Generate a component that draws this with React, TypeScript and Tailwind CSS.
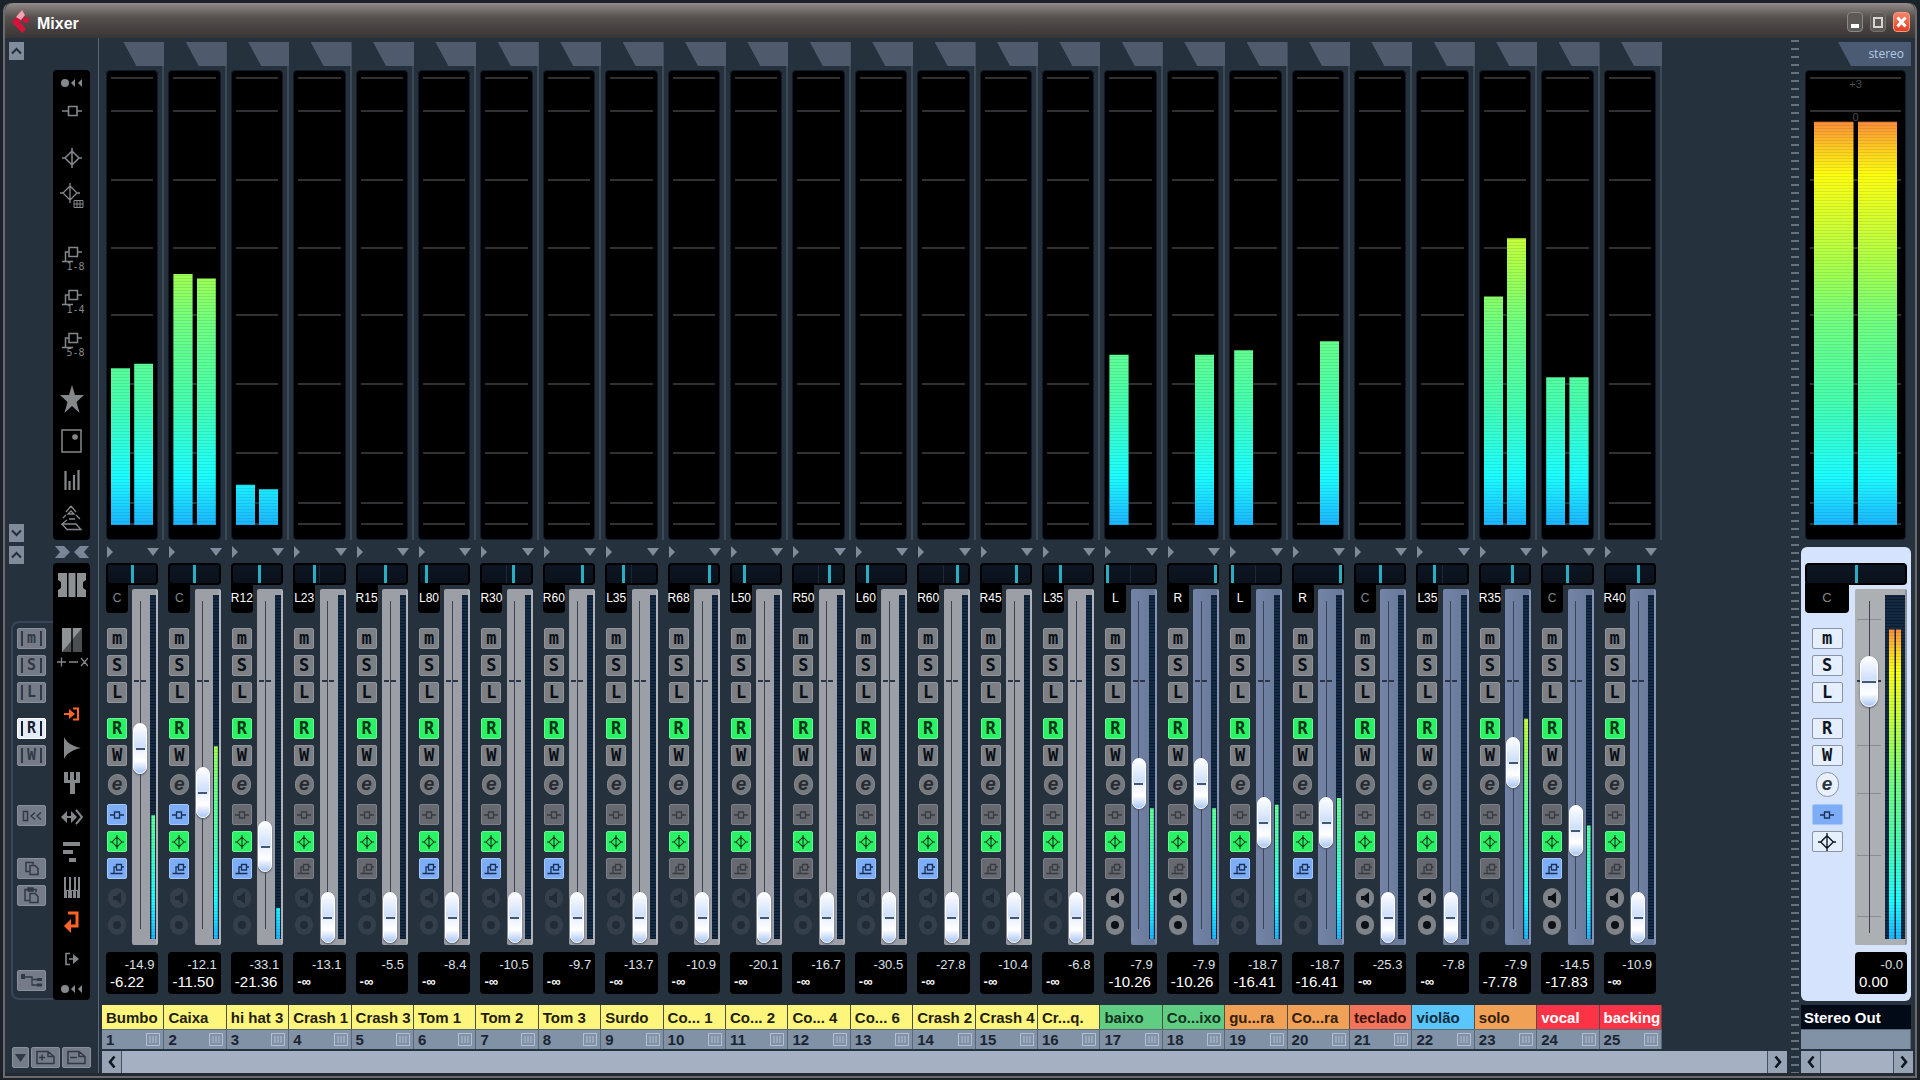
import { useState } from 'react';
import type { ReactNode } from 'react';
import clsx from 'clsx';

type Channel = {
  name: string;
  color: string;
  pan: number;
  level: [number, number];
  fader: number;
  peak: string;
  gain: string;
  insert?: boolean;
  send?: boolean;
  monitor?: boolean;
  audio?: boolean;
};

const YELLOW = 'bg-[#fdf57c] text-[#1f1e10]';
const GREEN = 'bg-[#5fce82] text-[#14301e]';
const ORANGE = 'bg-[#f0a156] text-[#33200c]';
const CORAL = 'bg-[#f3735a] text-[#3a120c]';
const BLUE = 'bg-[#5ac6fb] text-[#0f2c40]';
const RED = 'bg-[#fa3446] text-white';

const CHANNELS: Channel[] = [
  { name: 'Bumbo', color: YELLOW, pan: 0, level: [35, 36], fader: 169, peak: '-14.9', gain: '-6.22', insert: true, send: true },
  { name: 'Caixa', color: YELLOW, pan: 0, level: [56, 55], fader: 125, peak: '-12.1', gain: '-11.50', insert: true, send: true },
  { name: 'hi hat 3', color: YELLOW, pan: 12, level: [9, 8], fader: 71, peak: '-33.1', gain: '-21.36', send: true },
  { name: 'Crash 1', color: YELLOW, pan: -23, level: [0, 0], fader: 0, peak: '-13.1', gain: '-∞' },
  { name: 'Crash 3', color: YELLOW, pan: 15, level: [0, 0], fader: 0, peak: '-5.5', gain: '-∞' },
  { name: 'Tom 1', color: YELLOW, pan: -80, level: [0, 0], fader: 0, peak: '-8.4', gain: '-∞', send: true },
  { name: 'Tom 2', color: YELLOW, pan: 30, level: [0, 0], fader: 0, peak: '-10.5', gain: '-∞', send: true },
  { name: 'Tom 3', color: YELLOW, pan: 60, level: [0, 0], fader: 0, peak: '-9.7', gain: '-∞', send: true },
  { name: 'Surdo', color: YELLOW, pan: -35, level: [0, 0], fader: 0, peak: '-13.7', gain: '-∞' },
  { name: 'Co... 1', color: YELLOW, pan: 68, level: [0, 0], fader: 0, peak: '-10.9', gain: '-∞' },
  { name: 'Co... 2', color: YELLOW, pan: -50, level: [0, 0], fader: 0, peak: '-20.1', gain: '-∞' },
  { name: 'Co... 4', color: YELLOW, pan: 50, level: [0, 0], fader: 0, peak: '-16.7', gain: '-∞' },
  { name: 'Co... 6', color: YELLOW, pan: -60, level: [0, 0], fader: 0, peak: '-30.5', gain: '-∞', send: true },
  { name: 'Crash 2', color: YELLOW, pan: 60, level: [0, 0], fader: 0, peak: '-27.8', gain: '-∞', send: true },
  { name: 'Crash 4', color: YELLOW, pan: 45, level: [0, 0], fader: 0, peak: '-10.4', gain: '-∞' },
  { name: 'Cr...q.', color: YELLOW, pan: -35, level: [0, 0], fader: 0, peak: '-6.8', gain: '-∞' },
  { name: 'baixo', color: GREEN, pan: -100, level: [38, 0], fader: 134, peak: '-7.9', gain: '-10.26', monitor: true, audio: true },
  { name: 'Co...ixo', color: GREEN, pan: 100, level: [0, 38], fader: 134, peak: '-7.9', gain: '-10.26', monitor: true, audio: true },
  { name: 'gu...ra', color: ORANGE, pan: -100, level: [39, 0], fader: 95, peak: '-18.7', gain: '-16.41', send: true, audio: true },
  { name: 'Co...ra', color: ORANGE, pan: 100, level: [0, 41], fader: 95, peak: '-18.7', gain: '-16.41', send: true, audio: true },
  { name: 'teclado', color: CORAL, pan: 0, level: [0, 0], fader: 0, peak: '-25.3', gain: '-∞', monitor: true, audio: true },
  { name: 'violão', color: BLUE, pan: -35, level: [0, 0], fader: 0, peak: '-7.8', gain: '-∞', monitor: true, audio: true },
  { name: 'solo', color: ORANGE, pan: 35, level: [51, 64], fader: 155, peak: '-7.9', gain: '-7.78', audio: true },
  { name: 'vocal', color: RED, pan: 0, level: [33, 33], fader: 87, peak: '-14.5', gain: '-17.83', send: true, monitor: true, audio: true },
  { name: 'backing', color: RED, pan: 40, level: [0, 0], fader: 0, peak: '-10.9', gain: '-∞', monitor: true, audio: true },
];

const METER_FILL =
  'bg-[repeating-linear-gradient(to_top,rgba(0,40,60,0.1)_0_1px,transparent_1px_3px),linear-gradient(to_top,#1cb4ff_0%,#1cffff_11%,#48ffac_28%,#70ff80_45%,#a0ff50_56%,#c6ff3a_64%,#ffff10_78%,#ffcc20_84%,#ff8c38_90%)]';

function panLabel(pan: number) {
  if (pan === 0) return 'C';
  const side = pan < 0 ? 'L' : 'R';
  return Math.abs(pan) === 100 ? side : side + Math.abs(pan);
}

function Glyph({ w, h, className, children }: { w: number; h: number; className?: string; children: ReactNode }) {
  return (
    <svg width={w} height={h} viewBox={`0 0 ${w} ${h}`} className={className} fill="none" stroke="currentColor" strokeWidth="1.3" aria-hidden="true">
      {children}
    </svg>
  );
}

const InsertIcon = () => (
  <Glyph w={20} h={12}>
    <path d="M0 6h6M15 6h5M6.500 1.500h8.500v9h-8.500z" strokeWidth="1.600" />
  </Glyph>
);

const SmallInsertIcon = () => (
  <Glyph w={14} h={10}>
    <path d="M0 5h4M10 5h4M4.500 2h5v6h-5z" />
  </Glyph>
);

const EqIcon = ({ w = 20, h = 20 }: { w?: number; h?: number }) => (
  <svg width={w} height={h} viewBox="0 0 20 20" fill="none" stroke="currentColor" strokeWidth="1.500" aria-hidden="true">
    <path d="M0 10h3M17 10h3M10 0v20M10 3l7 7-7 7-7-7z" />
  </svg>
);

const SmallSendIcon = () => (
  <Glyph w={14} h={14}>
    <path d="M6.500 2.500h5v5.500h-5zM11.500 5h2.500M6.500 5h-2.500v6.500M0.500 11.500h12" />
  </Glyph>
);

const SendIcon = () => (
  <Glyph w={20} h={17}>
    <path d="M7 1.500h8.500v9h-8.500zM15.500 6h4.500M7 6h-3.500v9.500M0 15.500h11" strokeWidth="1.500" />
  </Glyph>
);

const RecIcon = () => (
  <svg width="22" height="10" viewBox="0 0 22 10" fill="currentColor" aria-hidden="true">
    <circle cx="4" cy="5" r="4" />
    <path d="M14 1v8l-4-4zM21 1v8l-4-4z" />
  </svg>
);

const Caret = ({ up }: { up?: boolean }) => (
  <Glyph w={11} h={8}>
    <path d={up ? 'M1 6.500l4.500-4.500 4.500 4.500' : 'M1 1.500l4.500 4.500 4.500-4.500'} strokeWidth="2" />
  </Glyph>
);

const Chevron = ({ left }: { left?: boolean }) => (
  <Glyph w={8} h={14}>
    <path d={left ? 'M6.500 1.500l-4.500 5.500 4.500 5.500' : 'M1.500 1.500l4.500 5.500-4.500 5.500'} strokeWidth="2.600" />
  </Glyph>
);

function TitleBar() {
  return (
    <header className="flex h-[35px] shrink-0 items-center rounded-t-lg bg-linear-to-b from-[#928d8b] via-[#57514f] via-40% to-[#383534] pt-[3px] pr-[5px] pl-[7px]">
      <svg width="18" height="24" viewBox="0 0 18 24" aria-hidden="true">
        <path d="M10 0l3 5-5 7 6 7-4 4L0 12z" fill="#d3133a" />
        <path d="M10 0l3 5-4 5-5-3z" fill="#f0a5b1" />
        <circle cx="14" cy="10" r="3" fill="#d3133a" />
      </svg>
      <h1 className="ml-[7px] flex-1 pt-[4px] text-base font-bold text-white">Mixer</h1>
      <div className="flex gap-[7px]">
        <button aria-label="Minimize" className="flex h-[20px] w-[16px] items-end rounded border border-[#8c8886] bg-[#5d5957] p-[3px]">
          <span className="h-[4px] w-[8px] bg-white" />
        </button>
        <button aria-label="Maximize" className="flex h-[20px] w-[16px] items-center justify-center rounded border border-[#777371] bg-[#5d5957]">
          <span className="h-[11px] w-[10px] border-2 border-[#d8d4d2]" />
        </button>
        <button aria-label="Close" className="flex h-[20px] w-[17px] items-center justify-center rounded border border-[#f79a80] bg-linear-to-b from-[#f58468] to-[#e13d22] text-white">
          <Glyph w={11} h={12}>
            <path d="M1.500 1.500l8 9M9.500 1.500l-8 9" strokeWidth="3" />
          </Glyph>
        </button>
      </div>
    </header>
  );
}

function SideButton({ label, on, narrow, className, children }: { label: string; on?: boolean; narrow?: boolean; className?: string; children: ReactNode }) {
  return (
    <button
      aria-label={label}
      className={clsx(
        'flex h-[21px] shrink-0 items-center justify-center rounded-[2px] border',
        narrow ? 'w-[17px]' : 'w-[29px]',
        on ? 'border-white bg-[#e4ebf8] text-[#18202c]' : 'border-[#8a909b] bg-[#757c87] text-[#303947]',
        className
      )}
    >
      {children}
    </button>
  );
}

function BarLetter({ children }: { children: string }) {
  return (
    <span className="flex h-[15px] items-center border-x-2 border-current px-[4px] font-['DejaVu_Sans_Mono',monospace] text-[15px] leading-none font-bold">
      {children}
    </span>
  );
}

function CollapseButton({ label, up, className }: { label: string; up?: boolean; className?: string }) {
  return (
    <button aria-label={label} className={clsx('ml-[4px] flex h-[18px] w-[15px] items-center justify-center bg-[#818b9b] text-[#242e3b]', className)}>
      <Caret up={up} />
    </button>
  );
}

function StripButton({ label, className, children }: { label: string; className?: string; children: ReactNode }) {
  return (
    <button aria-label={label} className={clsx('flex w-full shrink-0 flex-col items-center justify-center', className)}>
      {children}
    </button>
  );
}

function SendRange({ range, className }: { range: string; className: string }) {
  return (
    <StripButton label={`Sends ${range}`} className={className}>
      <SendIcon />
      <span className="-mt-[2px] pl-[8px] font-['DejaVu_Sans_Mono',monospace] text-[10px] leading-[12px]">{range}</span>
    </StripButton>
  );
}

function Sidebar() {
  return (
    <aside className="flex w-[93px] shrink-0 flex-col">
      <div className="flex flex-1">
        <div className="flex w-[48px] flex-col pt-[4px]">
          <CollapseButton label="Collapse top" up />
          <div className="flex-1" />
          <CollapseButton label="Expand bottom" />
          <CollapseButton label="Collapse bottom" up className="mt-[4px]" />
          <div className="mt-[57px] ml-[6px] flex h-[379px] flex-col rounded-l-lg border-y-2 border-l-2 border-[#3a4657] pl-[4px]">
            <SideButton label="Mute all" className="mt-[5px]"><BarLetter>m</BarLetter></SideButton>
            <SideButton label="Solo all" className="mt-[6px]"><BarLetter>S</BarLetter></SideButton>
            <SideButton label="Listen all" className="mt-[6px]"><BarLetter>L</BarLetter></SideButton>
            <SideButton label="Read all" on className="mt-[15px]"><BarLetter>R</BarLetter></SideButton>
            <SideButton label="Write all" className="mt-[6px]"><BarLetter>W</BarLetter></SideButton>
            <SideButton label="Reset" className="mt-[39px]">
              <Glyph w={20} h={12}>
                <path d="M1.500 1.500h4v9h-4zM13 2.500l-4 3.500 4 3.500M19 2.500l-4 3.500 4 3.500" strokeWidth="1.500" />
              </Glyph>
            </SideButton>
            <SideButton label="Copy" className="mt-[32px]">
              <Glyph w={14} h={15}>
                <path d="M4 10.500h-3v-9h7v2M5 4.500h5l3 3v6h-8z" strokeWidth="1.500" />
              </Glyph>
            </SideButton>
            <SideButton label="Paste" className="mt-[6px]">
              <Glyph w={15} h={17}>
                <path d="M5 13.500h-4v-11h11v3M4 1h5v3h-5zM6 6.500h5l3 3v6h-8z" strokeWidth="1.500" />
              </Glyph>
            </SideButton>
            <SideButton label="Routing" className="mt-[64px]">
              <Glyph w={21} h={14}>
                <path d="M1 3h10v8h6M11 5.500h6" />
                <path d="M0 0h4v5h-4zM16 4h5v3h-5zM16 9.500h5v3h-5z" fill="currentColor" stroke="none" />
              </Glyph>
            </SideButton>
          </div>
        </div>

        <div className="flex w-[37px] flex-col pt-[32px] text-[#85888b]">
          <nav aria-label="Extended view" className="flex flex-1 flex-col rounded bg-black">
            <StripButton label="Record view" className="mt-[2px] h-[22px]"><RecIcon /></StripButton>
            <StripButton label="Inserts" className="mt-[6px] h-[22px]"><InsertIcon /></StripButton>
            <StripButton label="Equalizers" className="mt-[25px] h-[22px]"><EqIcon /></StripButton>
            <StripButton label="Equalizer curves" className="mt-[12px] h-[30px]">
              <Glyph w={24} h={26}>
                <path d="M0 10h3M17 10h3M10 0v20M10 3l7 7-7 7-7-7z" />
                <path d="M14 17.500h9v7h-9zM14 21h9M17 17v8M20 17v8" strokeWidth="1" />
              </Glyph>
            </StripButton>
            <SendRange range="1-8" className="mt-[35px] h-[27px]" />
            <SendRange range="1-4" className="mt-[16px] h-[27px]" />
            <SendRange range="5-8" className="mt-[16px] h-[27px]" />
            <StripButton label="User panel" className="mt-[25px] h-[30px]">
              <svg width="24" height="28" viewBox="0 0 24 28" fill="currentColor" aria-hidden="true">
                <path d="M12 0l3 10h9l-7.500 7 3 11-7.500-7-7.500 7 3-11L0 10h9z" />
              </svg>
            </StripButton>
            <StripButton label="Surround" className="mt-[14px] h-[26px]">
              <Glyph w={21} h={24}>
                <path d="M1 1h19v22h-19z" strokeWidth="1.500" />
                <circle cx="14" cy="8" r="2.800" fill="currentColor" stroke="none" />
              </Glyph>
            </StripButton>
            <StripButton label="Meters" className="mt-[15px] h-[22px]">
              <Glyph w={16} h={20}>
                <path d="M1.500 1v19M5.500 11v9M10 5v15M14.500 0v20" strokeWidth="2.200" />
              </Glyph>
            </StripButton>
            <StripButton label="Overview" className="mt-[14px] h-[26px]">
              <Glyph w={22} h={26}>
                <path d="M10 1l-5 6M10 1l5 6M7 9h6l-3-3zM5 10l-3 3M15 10l4 4M6 15l-5 4h14l5 5.500h-14l-5-5.500M8 14h6" />
              </Glyph>
            </StripButton>
          </nav>
          <button aria-label="Narrow channels" className="flex h-[23px] items-center justify-center">
            <svg width="34" height="12" viewBox="0 0 34 12" fill="#7a8698" aria-hidden="true">
              <path d="M0 0h9l6 6-6 6H0l5-6zM34 0h-9l-6 6 6 6h9l-5-6z" />
            </svg>
          </button>
          <nav aria-label="Channel types" className="flex h-[437px] flex-col rounded bg-black">
            <StripButton label="Channel blocks" className="mt-[9px] h-[26px]">
              <svg width="28" height="24" viewBox="0 0 28 24" fill="#8e9194" aria-hidden="true">
                <path d="M0 0h9v24H0v-7l3-2V9L0 7zM10.500 0h7v24h-7zM19 0h9v7l-3 2v6l3 2v7h-9z" />
              </svg>
            </StripButton>
            <StripButton label="Split view" className="mt-[29px] h-[26px]">
              <svg width="20" height="24" viewBox="0 0 20 24" aria-hidden="true">
                <path d="M0 0h20v24H0z" fill="#4b4e52" />
                <path d="M0 24V0h20z" fill="#909396" />
                <path d="M10 0v24" stroke="#000" strokeWidth="1.500" />
              </svg>
            </StripButton>
            <StripButton label="Add, remove, toggle" className="mt-[2px] h-[14px]">
              <Glyph w={32} h={10}>
                <path d="M1 5h9M5.500 0.500v9M13 5h9M25 1l7 8M32 1l-7 8" />
              </Glyph>
            </StripButton>
            <StripButton label="Hide inputs" className="mt-[35px] h-[20px] text-[#ff6426]">
              <Glyph w={15} h={14}>
                <path d="M0 7h8M9 1.500h5v11h-5" strokeWidth="2" />
                <path d="M5 2l6 5-6 5z" fill="currentColor" stroke="none" />
              </Glyph>
            </StripButton>
            <StripButton label="Hide audio" className="mt-[12px] h-[24px]">
              <svg width="18" height="22" viewBox="0 0 18 22" fill="currentColor" aria-hidden="true">
                <path d="M1 0c2 5 8 9 17 11C9 13 3 17 1 22z" />
              </svg>
            </StripButton>
            <StripButton label="Hide groups" className="mt-[11px] h-[24px]">
              <svg width="16" height="22" viewBox="0 0 16 22" fill="currentColor" aria-hidden="true">
                <path d="M0 0h4v8h2V0h4v8h2V0h4v11h-5v11H6V11H0z" />
              </svg>
            </StripButton>
            <StripButton label="Hide ReWire" className="mt-[10px] h-[24px]">
              <Glyph w={22} h={16}>
                <path d="M2 8h12M15 1l6 7-6 7" strokeWidth="2" />
                <path d="M0 8l6-6v12zM16 8l-6-6v12z" fill="currentColor" stroke="none" />
              </Glyph>
            </StripButton>
            <StripButton label="Hide MIDI" className="mt-[11px] h-[24px]">
              <Glyph w={18} h={20}>
                <path d="M0 2h17M0 10h10M6 18h7" strokeWidth="4" />
              </Glyph>
            </StripButton>
            <StripButton label="Hide instruments" className="mt-[11px] h-[24px]">
              <svg width="16" height="21" viewBox="0 0 16 21" fill="currentColor" aria-hidden="true">
                <path d="M0 0h2v13h3V0h2v13h3V0h2v13h2V0h2v21h-3v-7h-1v7H9v-7H8v7H4v-7H3v7H0z" />
              </svg>
            </StripButton>
            <StripButton label="Hide FX returns" className="mt-[10px] h-[26px] text-[#ff6426]">
              <Glyph w={15} h={23}>
                <path d="M4 2h9v13H5" strokeWidth="3" />
                <path d="M7 8v14l-7-7z" fill="currentColor" stroke="none" />
              </Glyph>
            </StripButton>
            <StripButton label="Hide outputs" className="mt-[13px] h-[22px]">
              <Glyph w={14} h={14}>
                <path d="M5 1.500h-4v11h4M4 7h5" strokeWidth="1.600" />
                <path d="M8 2l6 5-6 5z" fill="currentColor" stroke="none" />
              </Glyph>
            </StripButton>
            <StripButton label="Initialize" className="mt-[9px] h-[20px]"><RecIcon /></StripButton>
          </nav>
        </div>
      </div>

      <div className="flex h-[73px] items-end gap-[2px] pb-[5px] pl-[7px]">
        <SideButton label="View sets" narrow>
          <svg width="11" height="8" viewBox="0 0 11 8" fill="currentColor" aria-hidden="true"><path d="M0 0h11L5.500 8z" /></svg>
        </SideButton>
        <SideButton label="Store view set">
          <Glyph w={20} h={15}>
            <path d="M1 1.500h11l6 5v7h-17zM12 1.500v5h6M3 7.500h6M6 4.500v6" strokeWidth="1.500" />
          </Glyph>
        </SideButton>
        <SideButton label="Remove view set">
          <Glyph w={20} h={15}>
            <path d="M1 1.500h11l6 5v7h-17zM12 1.500v5h6M3 7.500h7" strokeWidth="1.500" />
          </Glyph>
        </SideButton>
      </div>
    </aside>
  );
}

function Meter({ level, wide }: { level: [number, number]; wide?: boolean }) {
  return (
    <div className="relative flex flex-1 flex-col rounded border border-[#111a28] bg-black px-[4px] pt-[6px] pb-[14px]">
      <div className="grid flex-1 grid-rows-[33fr_69fr_68fr_68fr_69fr_69fr_50fr_21fr] border-b-2 border-[#303133]">
        {[0, 1, 2, 3, 4, 5, 6, 7].map((n) => (
          <div key={n} className="border-t-2 border-[#303133] text-center text-[11px] leading-[10px] text-[#4b4e52]">
            {wide && n === 0 && '+3'}
            {wide && n === 1 && '0'}
          </div>
        ))}
      </div>
      <div className={clsx('absolute inset-0 flex gap-[4px] pt-[6px] pb-[14px]', wide ? 'px-[8px]' : 'px-[4px]')}>
        {level.map((value, i) => (
          <div key={i} className={clsx('flex-1', METER_FILL)} style={{ clipPath: `inset(${100 - value}% 0 0 0)` }} />
        ))}
      </div>
    </div>
  );
}

function PanSlider({ name, value }: { name: string; value: number }) {
  const [pan, setPan] = useState(value);
  return (
    <input
      type="range"
      aria-label={`Pan ${name}`}
      min={-100}
      max={100}
      value={pan}
      onChange={(e) => setPan(Number(e.target.value))}
      className="block h-[22px] w-full appearance-none rounded border-2 border-black bg-[linear-gradient(to_right,transparent_49%,#1b2836_49%_51%,transparent_51%),linear-gradient(#0c1622,#0a111b)] [&::-webkit-slider-thumb]:h-[18px] [&::-webkit-slider-thumb]:w-[3px] [&::-webkit-slider-thumb]:appearance-none [&::-webkit-slider-thumb]:bg-[#27aec2]"
    />
  );
}

function Fader({ name, value, wide }: { name: string; value: number; wide?: boolean }) {
  const [gain, setGain] = useState(value);
  return (
    <div className={clsx('relative flex justify-center', wide ? 'w-[28px]' : 'w-[16px]')}>
      <div className="absolute inset-x-0 top-[12px] bottom-[10px] flex justify-center">
        <div className="w-px bg-[#3d4554]" />
      </div>
      <div className="absolute inset-x-[2px] top-[91px] flex justify-between">
        <div className="h-[2px] w-[5px] bg-[#2b3547]" />
        <div className="h-[2px] w-[5px] bg-[#2b3547]" />
      </div>
      <input
        type="range"
        aria-label={`Fader ${name}`}
        min={0}
        max={301}
        value={gain}
        onChange={(e) => setGain(Number(e.target.value))}
        className={clsx(
          'relative mt-[2px] h-[352px] appearance-none bg-transparent [direction:rtl] [writing-mode:vertical-lr] [&::-webkit-slider-thumb]:h-[51px] [&::-webkit-slider-thumb]:appearance-none [&::-webkit-slider-thumb]:rounded-full [&::-webkit-slider-thumb]:border [&::-webkit-slider-thumb]:border-white [&::-webkit-slider-thumb]:bg-[linear-gradient(#3f5876,#3f5876),linear-gradient(#ffffff,#cfe0fb_45%,#eef3ff_55%,#ffffff_75%,#a9c6f5)] [&::-webkit-slider-thumb]:bg-center [&::-webkit-slider-thumb]:bg-no-repeat [&::-webkit-slider-thumb]:shadow-[0_1px_2px_#4a5266]',
          wide
            ? 'w-[18px] [&::-webkit-slider-thumb]:w-[18px] [&::-webkit-slider-thumb]:bg-[length:14px_2px,100%_100%]'
            : 'w-[14px] [&::-webkit-slider-thumb]:w-[14px] [&::-webkit-slider-thumb]:bg-[length:9px_2px,100%_100%]'
        )}
      />
    </div>
  );
}

const LETTER = "font-['DejaVu_Sans_Mono',monospace] text-[17px] leading-none font-bold";

function ChannelButton({ label, look, wide, className, children }: { label: string; look: 'grey' | 'green' | 'blue' | 'off' | 'white'; wide?: boolean; className?: string; children: ReactNode }) {
  return (
    <button
      aria-label={label}
      className={clsx(
        'flex h-[21px] shrink-0 items-center justify-center rounded-[2px] border',
        wide ? 'w-[31px]' : 'w-[20px]',
        look === 'grey' && 'border-[#92959a] bg-[#7c7f84] text-[#0a1018]',
        look === 'green' && 'border-[#6cf594] bg-[#29f264] text-[#07351a]',
        look === 'blue' && 'border-[#a3c6fb] bg-[#7cadf6] text-[#1b3154]',
        look === 'off' && 'border-[#7d8087] bg-[#66696f] text-[#383c43]',
        look === 'white' && 'border-[#8a93a3] bg-[#e6effd] text-[#0e151e]',
        className
      )}
    >
      {children}
    </button>
  );
}

function EditButton({ name, white }: { name: string; white?: boolean }) {
  return (
    <button
      aria-label={`Edit ${name}`}
      className={clsx(
        "flex items-center justify-center rounded-full border font-['Liberation_Sans',sans-serif] text-[19px] leading-none font-bold italic",
        white ? 'mt-[6px] h-[25px] w-[23px] border-[#8a93a3] bg-[#e9f1fe] text-[#2c3440]' : 'mt-[8px] h-[21px] w-[19px] border-[#8d9095] bg-[#75787d] text-[#262b33]'
      )}
    >
      <span className="-mt-[2px]">e</span>
    </button>
  );
}

function RoundButton({ label, on, className, children }: { label: string; on?: boolean; className?: string; children: ReactNode }) {
  return (
    <button
      aria-label={label}
      disabled={!on}
      className={clsx('flex h-[20px] w-[18px] items-center justify-center rounded-full', on ? 'bg-[#7f8287] text-[#0b1119]' : 'bg-[#353f4b] text-[#212b37]', className)}
    >
      {children}
    </button>
  );
}

function Readout({ peak, gain }: { peak: string; gain: string }) {
  return (
    <div className="flex h-[42px] flex-col rounded bg-black px-[4px] pt-[5px] text-white">
      <output className="text-right text-[13px] leading-[16px] text-[#dde1e6]">{peak}</output>
      <output className={clsx('leading-[17px]', gain === '-∞' ? 'text-[13px] font-bold' : 'text-[15px]')}>{gain}</output>
    </div>
  );
}

function NumberRow({ children }: { children?: ReactNode }) {
  return (
    <div className="flex h-[20px] items-center justify-between border-t border-r border-[#5b6878] bg-[#8192a6] pr-[3px] pl-[4px] text-[15px] leading-none font-bold text-[#1b2531]">
      {children}
    </div>
  );
}

function ChannelStrip({ channel, number }: { channel: Channel; number: number }) {
  const { name, audio, monitor } = channel;
  const label = panLabel(channel.pan);
  const loudest = Math.max(...channel.level);

  return (
    <li className="flex min-w-0 flex-col">
      <div className="flex flex-1 flex-col pt-[4px]">
        <div className="ml-auto h-[24px] w-[41px] bg-[#4f5b6c] [clip-path:polygon(0_0,100%_0,100%_100%,13px_100%)]" />
        <div className="flex flex-1 flex-col border-r-2 border-[#3e4958] pt-[4px] pr-[4px] pl-[4px]">
          <Meter level={channel.level} />
        </div>
      </div>

      <div className="flex h-[23px] items-center justify-between pr-[5px] pl-[5px] text-[#808b9b]">
        <button aria-label={`Channel settings ${name}`}>
          <svg width="6" height="12" viewBox="0 0 6 12" fill="currentColor" aria-hidden="true"><path d="M0 0l6 6-6 6z" /></svg>
        </button>
        <button aria-label={`Channel menu ${name}`}>
          <svg width="12" height="8" viewBox="0 0 12 8" fill="currentColor" aria-hidden="true"><path d="M0 0h12L6 8z" /></svg>
        </button>
      </div>

      <div className="flex flex-col pr-[6px] pl-[4px]">
        <PanSlider name={name} value={channel.pan} />
        <div className="flex h-[360px] justify-between">
          <div className="flex w-[22px] flex-col items-center">
            <span className={clsx('-mt-[2px] flex h-[30px] w-full items-center justify-center rounded-b bg-black text-xs', label === 'C' ? 'text-[#84888e]' : 'text-white')}>
              {label}
            </span>
            <ChannelButton label={`Mute ${name}`} look="grey" className="mt-[15px]"><span className={LETTER}>m</span></ChannelButton>
            <ChannelButton label={`Solo ${name}`} look="grey" className="mt-[6px]"><span className={LETTER}>S</span></ChannelButton>
            <ChannelButton label={`Listen ${name}`} look="grey" className="mt-[6px]"><span className={LETTER}>L</span></ChannelButton>
            <ChannelButton label={`Read ${name}`} look="green" className="mt-[15px]"><span className={LETTER}>R</span></ChannelButton>
            <ChannelButton label={`Write ${name}`} look="grey" className="mt-[6px]"><span className={LETTER}>W</span></ChannelButton>
            <EditButton name={name} />
            <ChannelButton label={`Inserts ${name}`} look={channel.insert ? 'blue' : 'off'} className="mt-[9px]"><SmallInsertIcon /></ChannelButton>
            <ChannelButton label={`EQ ${name}`} look="green" className="mt-[6px]"><EqIcon w={14} h={16} /></ChannelButton>
            <ChannelButton label={`Sends ${name}`} look={channel.send ? 'blue' : 'off'} className="mt-[6px]"><SmallSendIcon /></ChannelButton>
            <RoundButton label={`Monitor ${name}`} on={monitor} className="mt-[9px]">
              <svg width="9" height="12" viewBox="0 0 9 12" fill="currentColor" aria-hidden="true"><path d="M0 4h3l5-4v12L3 8H0z" /></svg>
            </RoundButton>
            <RoundButton label={`Record ${name}`} on={monitor} className="mt-[7px]">
              <span className="size-[8px] rounded-full bg-current" />
            </RoundButton>
          </div>

          <div
            className={clsx(
              'mt-[4px] flex gap-[2px] rounded-[2px] border-r-2 pb-[6px]',
              audio ? 'border-[#8493b3] bg-linear-to-r from-[#7484a7] to-[#687898]' : 'border-[#b0b2b8] bg-[#9d9fa7]'
            )}
          >
            <Fader name={name} value={channel.fader} />
            <div className="mt-[6px] flex w-[6px] flex-col bg-[#132a42] bg-[repeating-linear-gradient(to_top,#0c1c30_0_1px,transparent_1px_3px)] px-[1px]">
              <div className={clsx('flex-1', METER_FILL)} style={{ clipPath: `inset(${100 - loudest}% 0 0 0)` }} />
            </div>
          </div>
        </div>
        <div className="mt-[7px]">
          <Readout peak={channel.peak} gain={channel.gain} />
        </div>
      </div>

      <div className={clsx('mt-[11px] h-[24px] overflow-hidden border-r border-[#4d4f48] pl-[4px] text-[15px] leading-[26px] font-bold whitespace-nowrap', channel.color)}>
        {name}
      </div>
      <NumberRow>
        {number}
        <svg width="14" height="13" viewBox="0 0 14 13" fill="none" stroke="#b3c0d0" aria-hidden="true">
          <path d="M0.500 0.500h13v12h-13zM4 3v7M7 3v7M10 3v7" />
        </svg>
      </NumberRow>
    </li>
  );
}

function ScrollBar({ label }: { label: string }) {
  return (
    <div className="mt-[2px] flex h-[22px] bg-[#a5b1c2] text-[#10161f]">
      <button aria-label={`Scroll ${label} left`} className="flex w-[20px] items-center justify-center border-r border-[#46515f] bg-[#97a4b5]">
        <Chevron left />
      </button>
      <div className="flex-1" />
      <button aria-label={`Scroll ${label} right`} className="flex w-[20px] items-center justify-center border-l border-[#46515f] bg-[#97a4b5]">
        <Chevron />
      </button>
    </div>
  );
}

function OutputStrip() {
  return (
    <section aria-label="Output" className="mr-[2px] flex w-[112px] shrink-0 flex-col">
      <div className="flex flex-1 flex-col pt-[4px] pr-[2px]">
        <div className="ml-auto h-[24px] w-[73px] bg-[#4a5b73] pt-[3px] pr-[7px] text-right font-['Open_Sans',sans-serif] text-xs leading-[18px] text-[#b4cbe8] [clip-path:polygon(0_0,100%_0,100%_100%,13px_100%)]">
          stereo
        </div>
        <div className="flex flex-1 flex-col pt-[4px] pr-[5px] pl-[4px]">
          <Meter level={[90, 90]} wide />
        </div>
      </div>

      <div className="mt-[7px] mr-[2px] flex flex-col rounded-md bg-[#d5e3fc] px-[4px] pt-[16px] pb-[7px]">
        <PanSlider name="Stereo Out" value={0} />
        <div className="flex h-[360px] justify-between">
          <div className="flex w-[44px] flex-col items-center">
            <span className="-mt-[2px] flex h-[30px] w-full items-center justify-center rounded-b bg-black text-[13px] text-[#84888e]">C</span>
            <ChannelButton label="Mute Stereo Out" look="white" wide className="mt-[15px]"><span className={LETTER}>m</span></ChannelButton>
            <ChannelButton label="Solo Stereo Out" look="white" wide className="mt-[6px]"><span className={LETTER}>S</span></ChannelButton>
            <ChannelButton label="Listen Stereo Out" look="white" wide className="mt-[6px]"><span className={LETTER}>L</span></ChannelButton>
            <ChannelButton label="Read Stereo Out" look="white" wide className="mt-[15px]"><span className={LETTER}>R</span></ChannelButton>
            <ChannelButton label="Write Stereo Out" look="white" wide className="mt-[6px]"><span className={LETTER}>W</span></ChannelButton>
            <EditButton name="Stereo Out" white />
            <ChannelButton label="Inserts Stereo Out" look="blue" wide className="mt-[7px]"><SmallInsertIcon /></ChannelButton>
            <ChannelButton label="EQ Stereo Out" look="white" wide className="mt-[6px]"><EqIcon w={18} h={18} /></ChannelButton>
          </div>
          <div className="mt-[4px] flex gap-[2px] rounded-[2px] border-r-2 border-[#8f929a] bg-[#adb0b2] pb-[6px]">
            <div className="relative">
              <div className="absolute inset-x-[2px] top-[30px] bottom-[22px] grid grid-rows-[127fr_49fr_62fr_62fr] border-b border-[#8b8d90]">
                <div className="border-t border-[#8b8d90]" />
                <div className="border-t border-[#8b8d90]" />
                <div className="border-t border-[#8b8d90]" />
                <div className="border-t border-[#8b8d90]" />
              </div>
              <Fader name="Stereo Out" value={236} wide />
            </div>
            <div className="mt-[6px] flex w-[20px] gap-[1px] bg-[#132a42] bg-[repeating-linear-gradient(to_top,#0c1c30_0_1px,transparent_1px_3px)] px-[4px]">
              <div className={clsx('flex-1', METER_FILL)} style={{ clipPath: 'inset(10% 0 0 0)' }} />
              <div className={clsx('flex-1', METER_FILL)} style={{ clipPath: 'inset(10% 0 0 0)' }} />
            </div>
          </div>
        </div>
        <div className="mt-[7px] ml-auto w-[52px]">
          <Readout peak="-0.0" gain="0.00" />
        </div>
      </div>

      <div className="mt-[4px] mr-[2px] h-[24px] bg-[#020a18] pl-[3px] text-[15px] leading-[26px] font-bold text-white">Stereo Out</div>
      <div className="mr-[2px]"><NumberRow /></div>
      <ScrollBar label="outputs" />
    </section>
  );
}

export default function App() {
  return (
    <div className="flex min-h-screen flex-col bg-[#1c2229] px-[3px] pt-[3px] pb-[2px] font-['Liberation_Sans',Arial,sans-serif]">
      <div className="flex flex-1 flex-col rounded-t-lg border-x-2 border-b-2 border-[#6e6a6c] bg-[#242a32]">
        <TitleBar />
        <main className="mb-[3px] flex flex-1 bg-[#26313e]">
          <Sidebar />
          <div className="w-px bg-[#5a6778]" />
          <section aria-label="Channels" className="ml-[3px] flex min-w-0 flex-1 flex-col">
            <ol className="mr-[125px] grid flex-1 grid-cols-25">
              {CHANNELS.map((channel, index) => (
                <ChannelStrip key={index} channel={channel} number={index + 1} />
              ))}
            </ol>
            <ScrollBar label="channels" />
          </section>
          <div className="mr-[2px] ml-[4px] w-[8px] bg-[repeating-linear-gradient(to_bottom,transparent_0_2px,#65717f_2px_4px,transparent_4px_8px)]" />
          <OutputStrip />
        </main>
      </div>
    </div>
  );
}
